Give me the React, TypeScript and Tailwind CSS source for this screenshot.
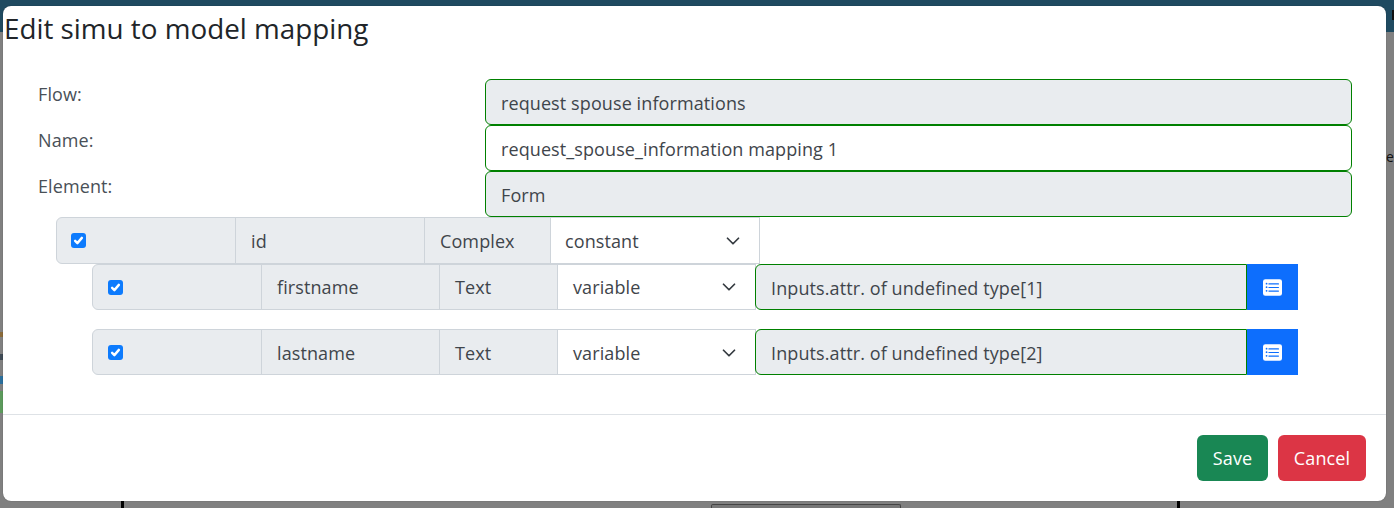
import { ChevronDown } from "lucide-react"

const font = "font-['Open_Sans','Noto_Sans',sans-serif]"

function Check({ className = "" }: { className?: string }) {
  return (
    <span className={`flex h-[15px] w-[15px] items-center justify-center rounded-[3px] bg-[#0d7bfd] ${className}`}>
      <svg viewBox="0 0 20 20" className="h-[15px] w-[15px]">
        <path d="M5.5 10.5l3 3 6-7" fill="none" stroke="#fff" strokeWidth="3.2" strokeLinecap="round" strokeLinejoin="round" />
      </svg>
    </span>
  )
}

function ListIcon() {
  return (
    <svg viewBox="0 0 16 16" className="h-[19px] w-[19px]" fill="#fff">
      <path d="M0 3a2 2 0 0 1 2-2h12a2 2 0 0 1 2 2v10a2 2 0 0 1-2 2H2a2 2 0 0 1-2-2V3zm5 1.5a.5.5 0 0 0 0 1h8a.5.5 0 0 0 0-1H5zm0 3a.5.5 0 0 0 0 1h8a.5.5 0 0 0 0-1H5zm0 3a.5.5 0 0 0 0 1h8a.5.5 0 0 0 0-1H5zM3 5.5a.75.75 0 1 0 0-1.5.75.75 0 0 0 0 1.5zm0 3a.75.75 0 1 0 0-1.5.75.75 0 0 0 0 1.5zm0 3a.75.75 0 1 0 0-1.5.75.75 0 0 0 0 1.5z" fillRule="evenodd" />
    </svg>
  )
}

function FormRow({ label, value, disabled }: { label: string; value: string; disabled?: boolean }) {
  return (
    <div className="flex h-[46px]">
      <div className="w-[448px] pt-[2px] pl-[1px] text-[#495057]">{label}</div>
      <div
        className={`flex h-[46px] w-[867px] items-center rounded-[6px] border border-[#008000] px-[15px] pt-[2px] ${
          disabled ? "bg-[#e9ecef]" : "bg-white"
        }`}
      >
        {value}
      </div>
    </div>
  )
}

function Cell({ className, children }: { className: string; children: React.ReactNode }) {
  return (
    <div className={`-ml-px flex items-center border border-[#ced4da] bg-[#e9ecef] px-[15px] first:ml-0 ${className}`}>
      {children}
    </div>
  )
}

function Select({ value, className, textClass = "" }: { value: string; className: string; textClass?: string }) {
  return (
    <div className={`-ml-px flex items-center justify-between border border-[#ced4da] bg-white pl-[15px] pr-[15px] ${className}`}>
      <span className={textClass}>{value}</span>
      <ChevronDown size={22} strokeWidth={1.9} className="text-[#343a40]" />
    </div>
  )
}

function ChildRow({ name, value, shift = "" }: { name: string; value: string; shift?: string }) {
  return (
    <div className="flex h-[46px] pl-[55px]">
      <Cell className="w-[170px] rounded-l-[6px]">
        <Check />
      </Cell>
      <Cell className={`w-[179px] ${shift}`}>{name}</Cell>
      <Cell className={`w-[119px] ${shift}`}>Text</Cell>
      <Select value="variable" className={`w-[199px] ${shift}`} />
      <div className="-ml-px flex h-[46px] w-[492px] items-center rounded-l-[6px] border border-[#008000] bg-[#e9ecef] px-[15px] pt-[2px]">
        {value}
      </div>
      <button className="flex h-[46px] w-[51px] items-center justify-center bg-[#0d6efd]">
        <ListIcon />
      </button>
    </div>
  )
}

export default function App() {
  return (
    <div className={`relative h-[508px] w-full overflow-hidden bg-[#808080] ${font} text-[18px] tracking-[0.1px] text-[#3f454b]`}>
      {/* page behind the backdrop */}
      <div className="h-[32px] bg-[#1f4a60]" />
      <div className="absolute left-[1392px] top-[10px] h-[10px] w-[2px] bg-[#111]" />
      <div className="absolute left-0 top-[391px] h-[22px] w-[3px] bg-[#5c9a5c]" />
      <div className="absolute left-0 top-[376px] h-[8px] w-[3px] bg-[#2b6f9c]" />
      <div className="absolute left-0 top-[354px] h-[6px] w-[3px] bg-[#3f4a55]" />
      <div className="absolute left-0 top-[332px] h-[5px] w-[3px] bg-[#8a6a3a]" />
      <div className="absolute bottom-0 left-[121px] h-[7px] w-[3px] bg-black" />
      <div className="absolute bottom-0 left-[1177px] h-[7px] w-[3px] bg-black" />
      <div className="absolute bottom-0 left-[711px] h-[4px] w-[190px] rounded-t-[2px] border border-b-0 border-[#444] bg-[#777]" />
      <span className="absolute left-[1386px] top-[146px] text-[14px] text-[#111]">e</span>

      {/* modal */}
      <div className="absolute left-[3px] top-[6px] flex h-[495px] w-[1383px] flex-col rounded-[8px] bg-white shadow-[0_0_1px_rgba(0,0,0,0.5)]">
        <div className="h-[50px] pl-[1px] text-[27.8px] leading-[44px] tracking-normal text-[#212529]">Edit simu to model mapping</div>
        <div className="flex flex-col pt-[23px] pl-[34px]">
          <FormRow label="Flow:" value="request spouse informations" disabled />
          <FormRow label="Name:" value="request_spouse_information mapping 1" />
          <FormRow label="Element:" value="Form" disabled />
          <div className="flex h-[47px] pl-[19px]">
            <Cell className="h-[47px] w-[180px] rounded-l-[6px]">
              <Check className="-ml-px" />
            </Cell>
            <Cell className="h-[47px] w-[190px] pt-[2px]">id</Cell>
            <Cell className="h-[47px] w-[127px] pt-[2px]">Complex</Cell>
            <Select value="constant" textClass="-ml-px pt-[2px]" className="h-[47px] w-[210px]" />
          </div>
          <ChildRow name="firstname" value="Inputs.attr. of undefined type[1]" />
          <div className="h-[19px]" />
          <ChildRow name="lastname" shift="pt-[2px]" value="Inputs.attr. of undefined type[2]" />
        </div>
        <div className="mt-[39px] flex flex-1 items-start justify-end gap-[10px] border-t border-[#dee2e6] pr-[20px] pt-[20px]">
          <button className="h-[46px] w-[71px] rounded-[6px] bg-[#198754] text-white">Save</button>
          <button className="h-[46px] w-[88px] rounded-[6px] bg-[#dc3545] text-white">Cancel</button>
        </div>
      </div>
    </div>
  )
}
